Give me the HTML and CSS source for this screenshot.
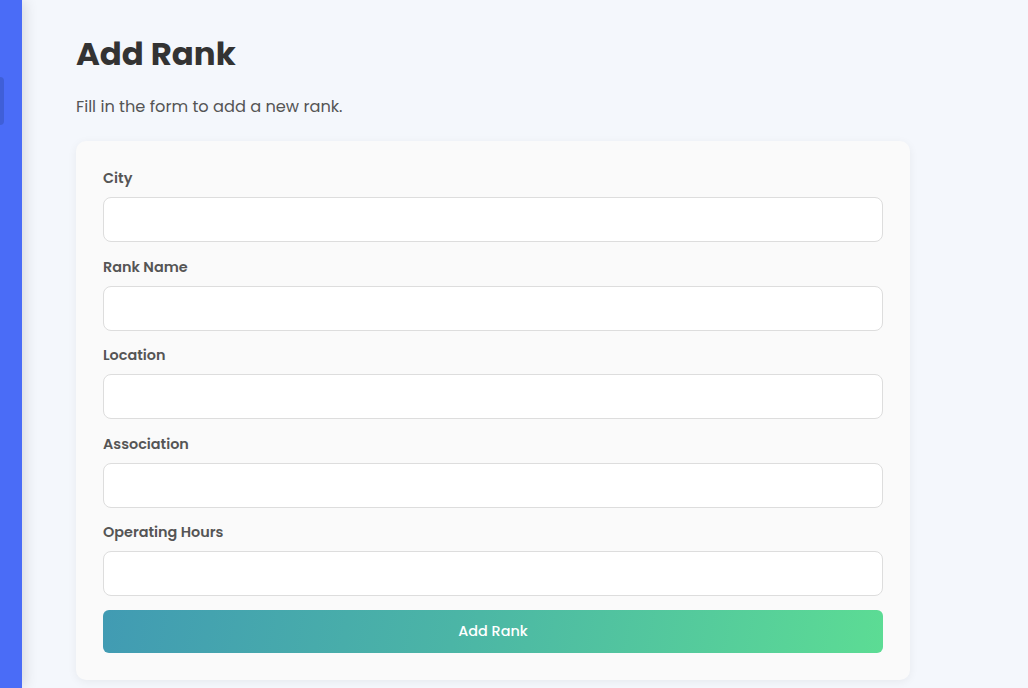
FILE: index.html
```html
<!DOCTYPE html>
<html lang="en">
<head>
<meta charset="utf-8">
<title>Add Rank</title>
<link rel="stylesheet" href="styles.css">
</head>
<body>
<div class="layout">
  <aside class="sidebar">
    <div class="sidebar-tab"></div>
  </aside>
  <main class="main">
    <h1 class="title">Add Rank</h1>
    <p class="subtitle">Fill in the form to add a new rank.</p>
    <form class="card">
      <div class="group">
        <label class="label">City</label>
        <input class="input" type="text">
      </div>
      <div class="group">
        <label class="label">Rank Name</label>
        <input class="input" type="text">
      </div>
      <div class="group">
        <label class="label">Location</label>
        <input class="input" type="text">
      </div>
      <div class="group">
        <label class="label">Association</label>
        <input class="input" type="text">
      </div>
      <div class="group">
        <label class="label">Operating Hours</label>
        <input class="input" type="text">
      </div>
      <button class="button" type="button">Add Rank</button>
    </form>
  </main>
</div>
</body>
</html>
```

FILE: styles.css
```css
* { box-sizing: border-box; }
html, body { margin: 0; padding: 0; height: 100%; }
body {
  font-family: "Poppins", "Open Sans", "Liberation Sans", sans-serif;
  background: #f4f7fc;
  color: #333;
  overflow: hidden;
}
.layout {
  display: flex;
  height: 688px;
}
.sidebar {
  width: 22px;
  flex: 0 0 22px;
  background: #4a6cf7;
  box-shadow: 3px 0 14px rgba(0, 0, 0, 0.12);
  position: relative;
  z-index: 1;
}
.sidebar-tab {
  margin-top: 77px;
  width: 4px;
  height: 48px;
  background: #3f5fd8;
  border-radius: 0 4px 4px 0;
}
.main {
  flex: 1;
  padding: 34px 54px 0;
}
.title {
  margin: 0;
  font-size: 32.4px;
  line-height: 40px;
  font-weight: 700;
  color: #333;
}
.subtitle {
  margin: 20px 0 0;
  font-size: 16.2px;
  line-height: 26px;
  color: #555;
}
.card {
  margin-top: 21px;
  width: 834px;
  background: #fafafa;
  border-radius: 10px;
  box-shadow: 0 2px 10px rgba(0, 0, 0, 0.06);
  padding: 27px 27px 27px;
  display: flex;
  flex-direction: column;
}
.group {
  display: flex;
  flex-direction: column;
  margin-bottom: 14.5px;
}
.label {
  font-size: 14.4px;
  line-height: 21px;
  font-weight: 600;
  color: #555;
  margin-bottom: 8px;
}
.input {
  height: 45px;
  border: 1px solid #dddddd;
  border-radius: 8px;
  background: #fff;
  font: inherit;
  padding: 0 12px;
}
.button {
  margin-top: -0.5px;
  height: 43px;
  border: 0;
  border-radius: 6px;
  background: linear-gradient(100deg, #419bb3 0%, #4bb5a6 45%, #5cdc94 100%);
  color: #fff;
  font-family: inherit;
  font-size: 14.4px;
  font-weight: 500;
}
```
